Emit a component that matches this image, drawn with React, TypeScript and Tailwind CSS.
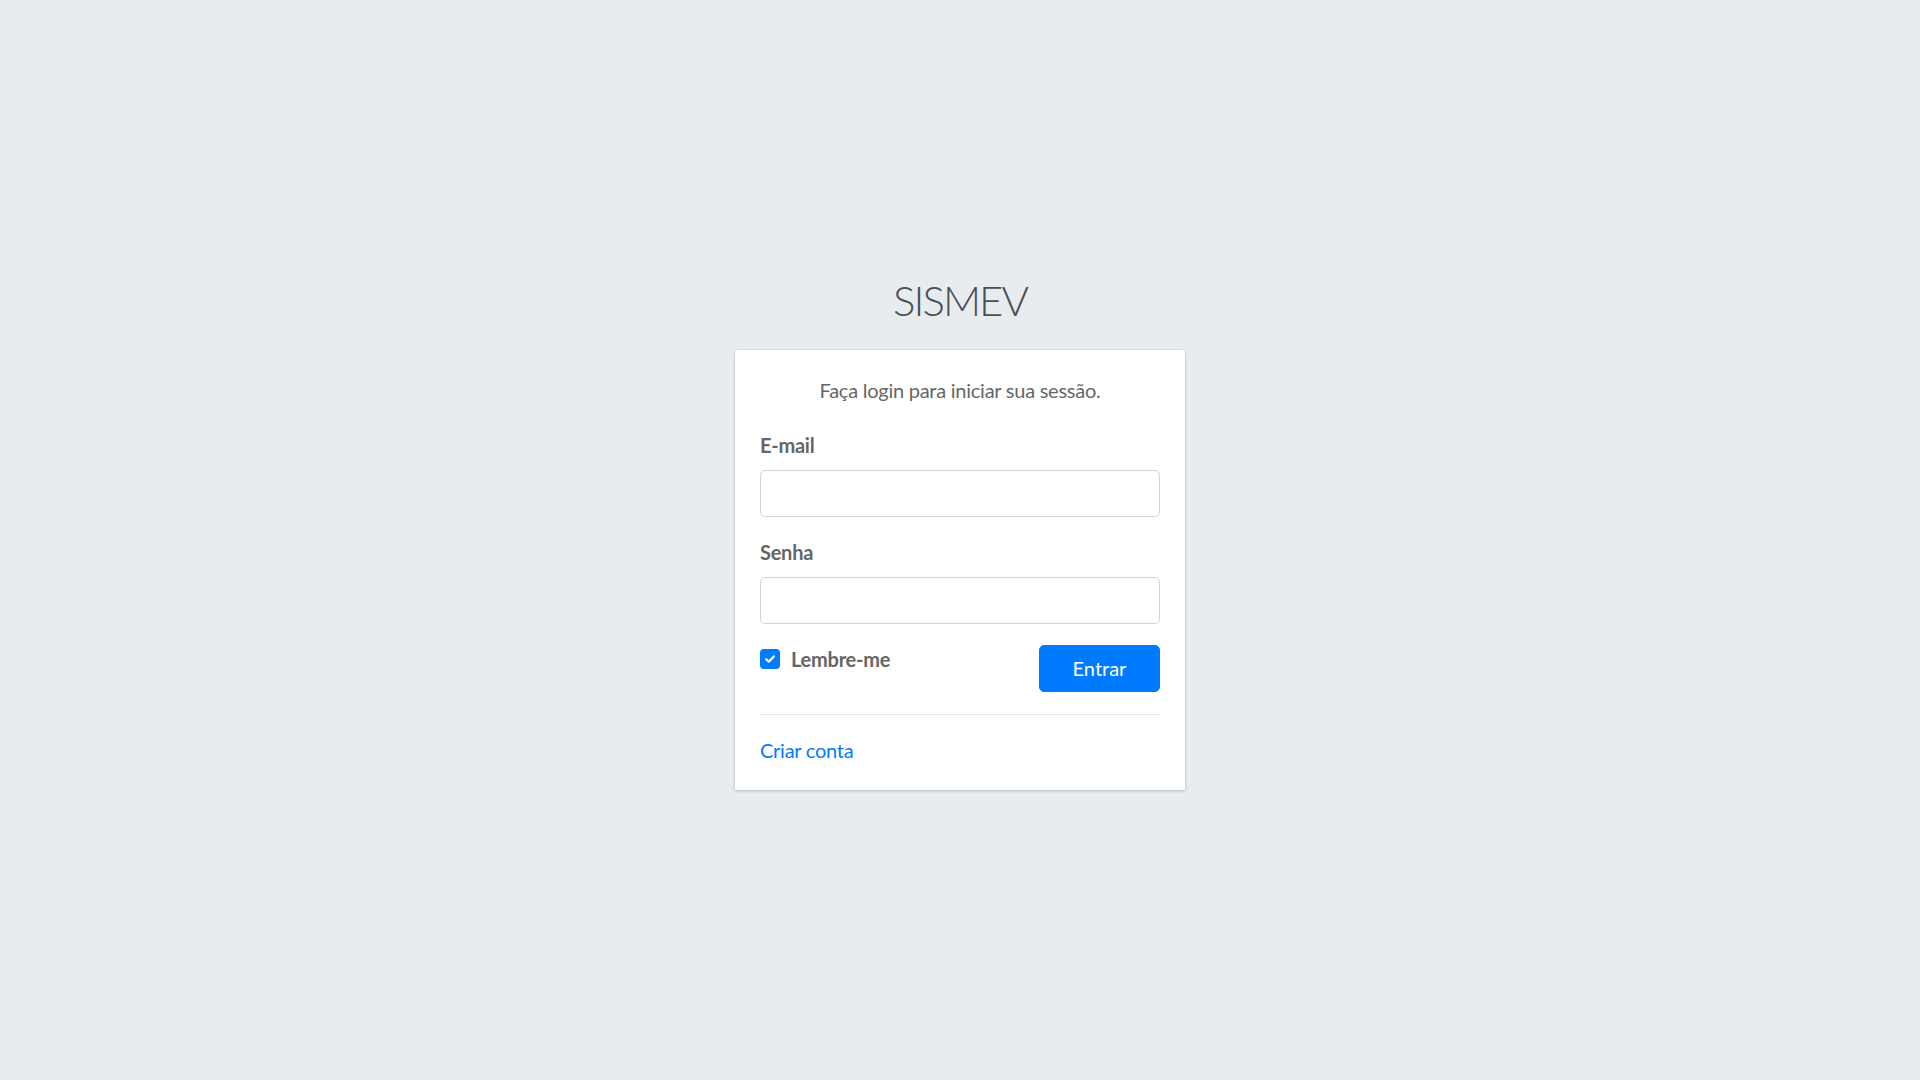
import { useState } from 'react';

const font = { fontFamily: 'Lato, "Noto Sans", sans-serif' };

export default function App() {
  const [remember, setRemember] = useState(true);

  return (
    <div
      className="flex min-h-screen flex-col items-center justify-center bg-[#e9ecef] pb-[22px] text-[20px] leading-[30px] tracking-[-0.25px] text-[#666]"
      style={font}
    >
      <div className="w-[450px]">
        <div className="mb-[18px] text-center text-[42px] leading-[63px] font-light tracking-[-2px] text-[#495057]">
          SISMEV
        </div>

        <div className="bg-white p-[25px] shadow-[0_0_1px_rgba(0,0,0,0.125),0_1px_3px_rgba(0,0,0,0.2)]">
          <p className="px-[25px] pb-[25px] text-center">Faça login para iniciar sua sessão.</p>

          <form onSubmit={(e) => e.preventDefault()}>
            <div className="mb-[20px]">
              <label className="mb-[10px] inline-block font-bold">E-mail</label>
              <input
                type="email"
                className="block h-[47px] w-full rounded-[5px] border border-[#ced4da] bg-white px-[15px] text-[#495057] outline-none"
              />
            </div>

            <div className="mb-[20px]">
              <label className="mb-[10px] inline-block font-bold">Senha</label>
              <input
                type="password"
                className="block h-[47px] w-full rounded-[5px] border border-[#ced4da] bg-white px-[15px] text-[#495057] outline-none"
              />
            </div>

            <div className="flex items-start justify-between">
              <label className="flex cursor-pointer items-center gap-[11px] font-bold">
                <span
                  onClick={() => setRemember(!remember)}
                  className="flex h-[20px] w-[20px] items-center justify-center rounded-[4px] bg-[#007bff]"
                >
                  {remember && (
                    <svg viewBox="0 0 12 12" className="h-[12px] w-[12px]" fill="none">
                      <path d="M2.2 6.3 4.8 8.8 9.8 3.4" stroke="white" strokeWidth="2.2" strokeLinecap="round" strokeLinejoin="round" />
                    </svg>
                  )}
                </span>
                Lembre-me
              </label>
              <button
                type="submit"
                className="mt-[1px] h-[47px] w-[121px] rounded-[5px] border border-[#007bff] bg-[#007bff] tracking-normal text-white"
              >
                Entrar
              </button>
            </div>
          </form>

          <hr className="mt-[22px] mb-[20px] border-t border-black/10" />

          <p>
            <a href="#" className="text-[#007bff]">
              Criar conta
            </a>
          </p>
        </div>
      </div>
    </div>
  );
}
